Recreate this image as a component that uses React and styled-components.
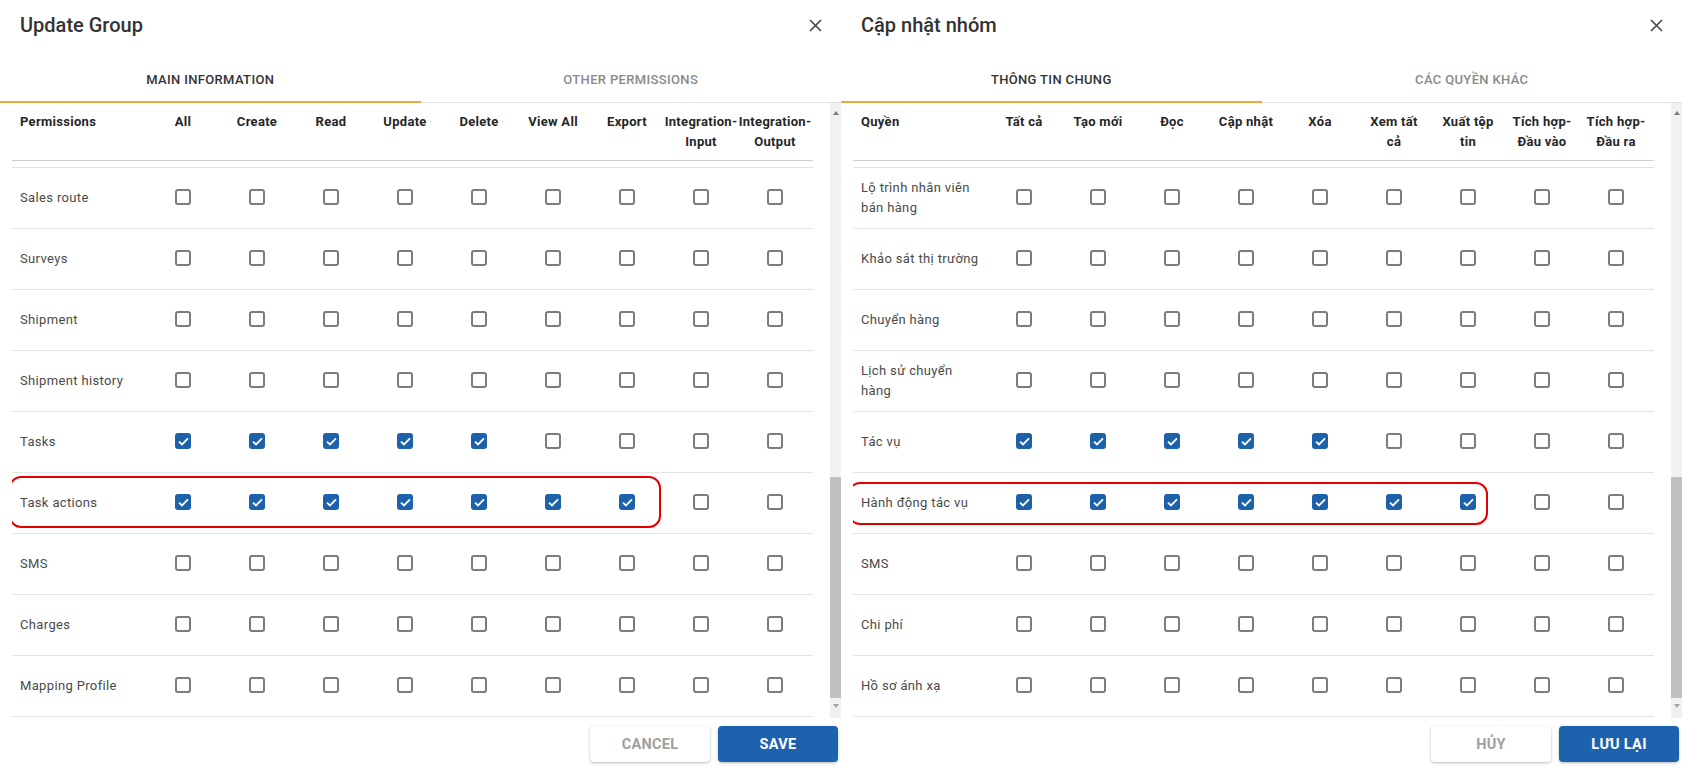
import React from 'react';
import styled, { createGlobalStyle } from 'styled-components';

const GlobalStyle = createGlobalStyle`
  body {
    margin: 0;
    background: #fff;
    font-family: Roboto, 'Noto Sans', sans-serif;
  }
`;

const Page = styled.div`
  display: flex;
  width: 1682px;
  height: 767px;
  overflow: hidden;
`;

const Dialog = styled.div`
  display: flex;
  flex-direction: column;
  width: 841px;
  height: 767px;
  background: #fff;
`;

const TitleBar = styled.div`
  display: flex;
  align-items: flex-start;
  justify-content: space-between;
  height: 55px;
  box-sizing: border-box;
  padding: 13px 18px 0 20px;
`;

const Title = styled.h2`
  margin: 0;
  font-size: 20px;
  line-height: 24px;
  font-weight: 500;
  color: #333;
`;

const CloseButton = styled.button`
  border: none;
  background: none;
  padding: 0;
  width: 16px;
  height: 24px;
  display: flex;
  align-items: center;
  justify-content: center;
  color: #444;
  cursor: pointer;
`;

const Tabs = styled.div`
  display: flex;
  height: 48px;
  border-bottom: 1px solid #e2e2e2;
  box-sizing: border-box;
`;

const Tab = styled.div`
  flex: 1;
  display: flex;
  align-items: center;
  justify-content: center;
  font-size: 13px;
  font-weight: 500;
  letter-spacing: 0.35px;
  text-transform: uppercase;
  color: ${p => (p.$active ? '#333' : '#8a8a8a')};
  box-shadow: ${p => (p.$active ? 'inset 0 -2px 0 #f2a93b' : 'none')};
  margin-bottom: -1px;
  padding-top: 1px;
`;

const Body = styled.div`
  display: flex;
  height: 615px;
`;

const TableArea = styled.div`
  width: 801px;
  margin-left: 12px;
  overflow: hidden;
`;

const Grid = styled.div`
  display: grid;
  grid-template-columns: 134px repeat(9, 74px);
`;

const HeadRow = styled(Grid)`
  height: 58px;
  box-sizing: border-box;
  border-bottom: 1px solid #cfcfcf;
`;

const HeadCell = styled.div`
  padding-top: 9px;
  font-size: 13px;
  line-height: 20px;
  font-weight: 700;
  color: #262626;
  letter-spacing: 0.3px;
  white-space: nowrap;
  text-align: ${p => (p.$left ? 'left' : 'center')};
  padding-left: ${p => (p.$left ? '8px' : '0')};
`;

const RowTail = styled.div`
  height: 7px;
  box-sizing: border-box;
  border-bottom: 1px solid #e3e3e3;
`;

const Row = styled(Grid)`
  position: relative;
  height: 61px;
  box-sizing: border-box;
  border-bottom: 1px solid #e3e3e3;
  align-items: center;
`;

const Label = styled.div`
  padding-left: 8px;
  font-size: 13px;
  line-height: 20px;
  color: #4a4a4a;
  letter-spacing: 0.35px;
`;

const BoxCell = styled.div`
  display: flex;
  justify-content: center;
  margin-top: -2px;
`;

const Box = styled.span`
  width: 16px;
  height: 16px;
  box-sizing: border-box;
  border-radius: 3px;
  border: 2px solid ${p => (p.$checked ? '#1e61ab' : '#7c7c7c')};
  background: ${p => (p.$checked ? '#1e61ab' : '#fff')};
  display: flex;
  align-items: center;
  justify-content: center;
`;

const Highlight = styled.div`
  position: absolute;
  border: 2.5px solid #e50000;
  border-radius: 12px;
  box-sizing: border-box;
  pointer-events: none;
`;

const Scrollbar = styled.div`
  margin-left: auto;
  width: 11px;
  background: #f1f1f1;
  display: flex;
  flex-direction: column;
  align-items: center;
`;

const Arrow = styled.div`
  width: 0;
  height: 0;
  border-left: 3.5px solid transparent;
  border-right: 3.5px solid transparent;
  ${p => (p.$down
    ? 'border-top: 4px solid #a3a3a3; margin-top: 6px;'
    : 'border-bottom: 4px solid #7d7d7d; margin-top: 8px;')}
`;

const Thumb = styled.div`
  width: 100%;
  height: 221px;
  background: #c1c1c1;
  margin-top: auto;
`;

const ScrollEnd = styled.div`
  height: 10px;
`;

const Footer = styled.div`
  display: flex;
  justify-content: flex-end;
  gap: 8px;
  padding: 8px 3px 0 0;
`;

const Button = styled.button`
  width: 120px;
  height: 36px;
  border: none;
  border-radius: 4px;
  font-family: Roboto, 'Noto Sans', sans-serif;
  font-size: 14.5px;
  font-weight: 700;
  letter-spacing: 0.3px;
  text-transform: uppercase;
  cursor: pointer;
  background: ${p => (p.$primary ? '#1c62ad' : '#fff')};
  color: ${p => (p.$primary ? '#fff' : '#a0a0a0')};
  box-shadow: 0 1px 3px rgba(0, 0, 0, 0.28);
`;

function CloseIcon() {
  return (
    <svg width="13" height="13" viewBox="0 0 13 13">
      <path d="M1 1 L12 12 M12 1 L1 12" stroke="currentColor" strokeWidth="1.6" />
    </svg>
  );
}

function Checkbox({ checked }) {
  return (
    <BoxCell>
      <Box $checked={checked}>
        {checked && (
          <svg width="11" height="9" viewBox="0 0 11 9">
            <path d="M1 4.6 L4 7.4 L10 1.4" fill="none" stroke="#fff" strokeWidth="1.8" />
          </svg>
        )}
      </Box>
    </BoxCell>
  );
}

function Lines({ text }) {
  const parts = Array.isArray(text) ? text : [text];
  return parts.map((t, i) => (
    <React.Fragment key={i}>
      {i > 0 && <br />}
      {t}
    </React.Fragment>
  ));
}

function PermissionDialog({ data }) {
  return (
    <Dialog>
      <TitleBar>
        <Title>{data.title}</Title>
        <CloseButton><CloseIcon /></CloseButton>
      </TitleBar>
      <Tabs>
        <Tab $active>{data.tabs[0]}</Tab>
        <Tab>{data.tabs[1]}</Tab>
      </Tabs>
      <Body>
        <TableArea>
          <HeadRow>
            <HeadCell $left>{data.firstHeader}</HeadCell>
            {data.columns.map((c, i) => (
              <HeadCell key={i}><Lines text={c} /></HeadCell>
            ))}
          </HeadRow>
          <RowTail />
          {data.rows.map((r, i) => (
            <Row key={i}>
              <Label><Lines text={r.name} /></Label>
              {data.columns.map((_, j) => (
                <Checkbox key={j} checked={j < r.checked} />
              ))}
              {r.mark && (
                <Highlight
                  style={{ left: r.mark.left, top: r.mark.top, width: r.mark.width, height: r.mark.height }}
                />
              )}
            </Row>
          ))}
        </TableArea>
        <Scrollbar>
          <Arrow />
          <Thumb />
          <Arrow $down />
          <ScrollEnd />
        </Scrollbar>
      </Body>
      <Footer>
        <Button>{data.cancel}</Button>
        <Button $primary>{data.save}</Button>
      </Footer>
    </Dialog>
  );
}

const english = {
  title: 'Update Group',
  tabs: ['Main Information', 'Other Permissions'],
  firstHeader: 'Permissions',
  columns: ['All', 'Create', 'Read', 'Update', 'Delete', 'View All', 'Export', ['Integration-', 'Input'], ['Integration-', 'Output']],
  rows: [
    { name: 'Sales route', checked: 0 },
    { name: 'Surveys', checked: 0 },
    { name: 'Shipment', checked: 0 },
    { name: 'Shipment history', checked: 0 },
    { name: 'Tasks', checked: 5 },
    { name: 'Task actions', checked: 7, mark: { left: -3, top: 3, width: 652, height: 52 } },
    { name: 'SMS', checked: 0 },
    { name: 'Charges', checked: 0 },
    { name: 'Mapping Profile', checked: 0 },
  ],
  cancel: 'Cancel',
  save: 'Save',
};

const vietnamese = {
  title: 'Cập nhật nhóm',
  tabs: ['Thông tin chung', 'Các quyền khác'],
  firstHeader: 'Quyền',
  columns: ['Tất cả', 'Tạo mới', 'Đọc', 'Cập nhật', 'Xóa', ['Xem tất', 'cả'], ['Xuất tệp', 'tin'], ['Tích hợp-', 'Đầu vào'], ['Tích hợp-', 'Đầu ra']],
  rows: [
    { name: ['Lộ trình nhân viên', 'bán hàng'], checked: 0 },
    { name: 'Khảo sát thị trường', checked: 0 },
    { name: 'Chuyển hàng', checked: 0 },
    { name: ['Lịch sử chuyển', 'hàng'], checked: 0 },
    { name: 'Tác vụ', checked: 5 },
    { name: 'Hành động tác vụ', checked: 7, mark: { left: -5, top: 9, width: 640, height: 43 } },
    { name: 'SMS', checked: 0 },
    { name: 'Chi phí', checked: 0 },
    { name: 'Hồ sơ ánh xạ', checked: 0 },
  ],
  cancel: 'Hủy',
  save: 'Lưu lại',
};

export default function App() {
  return (
    <>
      <GlobalStyle />
      <Page>
        <PermissionDialog data={english} />
        <PermissionDialog data={vietnamese} />
      </Page>
    </>
  );
}
